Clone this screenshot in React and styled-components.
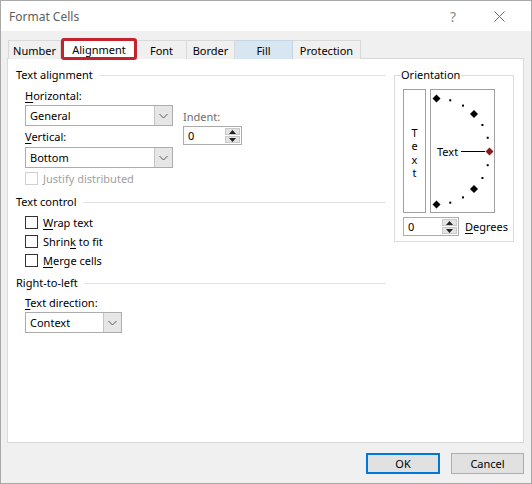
import styled, { createGlobalStyle } from "styled-components";

const GlobalStyle = createGlobalStyle`
	body {
		margin: 0;
		background: #ffffff;
		font-family: "Noto Sans", "Open Sans", sans-serif;
		font-size: 11px;
		color: #000;
	}
	u {
		text-decoration-thickness: 1px;
		text-underline-offset: 2px;
	}
`;

const Window = styled.div`
	box-sizing: border-box;
	width: 532px;
	height: 484px;
	border: 1px solid #a8a8a8;
	background: #f0f0f0;
	display: flex;
	flex-direction: column;
`;

const TitleBar = styled.div`
	height: 30px;
	background: #ffffff;
	display: flex;
	align-items: center;
	padding: 0 9px 0 8px;
	color: #5e5e5e;
	font-size: 12px;
`;

const Title = styled.span`
	flex: 1;
`;

const TitleButton = styled.div`
	width: 46px;
	height: 30px;
	display: flex;
	align-items: center;
	justify-content: center;
	color: #8a8a8a;
	font-size: 14px;
`;

const TabStrip = styled.div`
	display: flex;
	align-items: flex-end;
	height: 19px;
	margin: 9px 0 -1px 7px;
	position: relative;
	z-index: 1;
`;

const Tab = styled.div`
	box-sizing: border-box;
	flex-shrink: 0;
	width: ${(p) => p.$w}px;
	height: ${(p) => (p.$active ? 22 : 19)}px;
	margin-bottom: ${(p) => (p.$active ? -1 : 0)}px;
	display: flex;
	align-items: center;
	justify-content: center;
	background: ${(p) => (p.$active ? "#ffffff" : p.$hover ? "#d8e6f2" : "#f0f0f0")};
	border: ${(p) =>
		p.$active ? "3px solid #c4232d" : p.$hover ? "1px solid #c3d6e8" : "1px solid #d9d9d9"};
	border-bottom: ${(p) => (p.$active ? "3px solid #c4232d" : "none")};
	border-left: ${(p) => (p.$active ? "3px solid #c4232d" : p.$first ? "1px solid #d9d9d9" : "none")};
	border-radius: ${(p) => (p.$active ? "3px" : "0")};
	padding-top: ${(p) => (p.$active ? 0 : 1)}px;
	color: #000;
`;

const Panel = styled.div`
	box-sizing: border-box;
	margin: 0 7px 0 6px;
	height: 385px;
	background: #ffffff;
	border: 1px solid #d9d9d9;
	padding: 9px 8px 0 8px;
	display: flex;
	gap: 8px;
	align-items: flex-start;
`;

const LeftColumn = styled.div`
	width: 370px;
	display: flex;
	flex-direction: column;
`;

const SectionHeader = styled.div`
	display: flex;
	align-items: center;
	height: 14px;
	line-height: 14px;
	margin-top: ${(p) => p.$mt || 0}px;
	white-space: nowrap;
	&::after {
		content: "";
		flex: 1;
		height: 1px;
		background: #e2e2e2;
		margin-left: 6px;
	}
`;

const Indented = styled.div`
	margin-left: 9px;
	display: flex;
	flex-direction: column;
`;

const AlignRow = styled.div`
	display: flex;
	gap: 10px;
	margin-top: 7px;
`;

const Stack = styled.div`
	display: flex;
	flex-direction: column;
`;

const Label = styled.div`
	height: 14px;
	line-height: 14px;
	margin-top: ${(p) => p.$mt || 0}px;
	color: ${(p) => (p.$muted ? "#6d6d6d" : "#000")};
	white-space: nowrap;
`;

const Select = styled.div`
	box-sizing: border-box;
	width: ${(p) => p.$w}px;
	height: 21px;
	margin-top: ${(p) => p.$mt || 0}px;
	border: 1px solid #acacac;
	background: #ffffff;
	display: flex;
	align-items: stretch;
`;

const SelectValue = styled.div`
	flex: 1;
	display: flex;
	align-items: center;
	padding-left: 4px;
`;

const SelectArrow = styled.div`
	width: 17px;
	background: #e6e6e6;
	border-left: 1px solid #c4c4c4;
	display: flex;
	align-items: center;
	justify-content: center;
`;

const Spinner = styled.div`
	box-sizing: border-box;
	width: ${(p) => p.$w}px;
	height: 19px;
	margin-top: ${(p) => p.$mt || 0}px;
	border: 1px solid #acacac;
	background: #ffffff;
	display: flex;
	padding: 1px;
`;

const SpinValue = styled.div`
	flex: 1;
	display: flex;
	align-items: center;
	padding-left: 3px;
`;

const SpinButtons = styled.div`
	width: 15px;
	display: flex;
	flex-direction: column;
	gap: 1px;
`;

const SpinButton = styled.div`
	flex: 1;
	background: #e3e3e3;
	border: 1px solid #c9c9c9;
	display: flex;
	align-items: center;
	justify-content: center;
`;

const CheckRow = styled.div`
	display: flex;
	align-items: center;
	gap: 5px;
	height: 14px;
	margin-top: ${(p) => p.$mt || 0}px;
	color: ${(p) => (p.$disabled ? "#a0a0a0" : "#000")};
	white-space: nowrap;
`;

const CheckBox = styled.div`
	box-sizing: border-box;
	width: 13px;
	height: 13px;
	border: 1px solid ${(p) => (p.$disabled ? "#d0d0d0" : "#333333")};
	background: #ffffff;
`;

const OrientationGroup = styled.div`
	position: relative;
	box-sizing: border-box;
	width: 120px;
	height: 167px;
	margin-top: 7px;
	border: 1px solid #dcdcdc;
	padding: 13px 0 0 8px;
`;

const Legend = styled.div`
	position: absolute;
	top: -8px;
	left: 5px;
	padding: 0 1px;
	background: #ffffff;
	line-height: 14px;
`;

const OrientRow = styled.div`
	display: flex;
	gap: 4px;
`;

const VerticalBox = styled.div`
	box-sizing: border-box;
	width: 23px;
	height: 124px;
	border: 1px solid #a0a0a0;
	display: flex;
	align-items: center;
	justify-content: center;
`;

const VerticalText = styled.span`
	writing-mode: vertical-lr;
	text-orientation: upright;
	letter-spacing: -1.7px;
	line-height: 13px;
	margin-top: 2px;
`;

const DialBox = styled.div`
	box-sizing: border-box;
	width: 65px;
	height: 124px;
	border: 1px solid #a0a0a0;
	display: flex;
`;

const DegreesRow = styled.div`
	display: flex;
	align-items: center;
	gap: 6px;
	margin-top: 4px;
`;

const Footer = styled.div`
	display: flex;
	justify-content: flex-end;
	gap: 11px;
	margin: 10px 7px 0 0;
`;

const Button = styled.div`
	box-sizing: border-box;
	width: ${(p) => p.$w}px;
	height: 21px;
	background: #e1e1e1;
	border: ${(p) => (p.$default ? "2px solid #0078d7" : "1px solid #adadad")};
	display: flex;
	align-items: center;
	justify-content: center;
`;

function Chevron() {
	return (
		<svg width="9" height="6" viewBox="0 0 9 6">
			<path d="M0.5 1 L4.5 5 L8.5 1" fill="none" stroke="#555" strokeWidth="1" />
		</svg>
	);
}

function Arrow({ up }) {
	return (
		<svg width="7" height="4" viewBox="0 0 7 4">
			<path d={up ? "M0 4 L3.5 0 L7 4 Z" : "M0 0 L3.5 4 L7 0 Z"} fill="#222" />
		</svg>
	);
}

function SelectBox({ w, mt, value }) {
	return (
		<Select $w={w} $mt={mt}>
			<SelectValue>{value}</SelectValue>
			<SelectArrow>
				<Chevron />
			</SelectArrow>
		</Select>
	);
}

function SpinBox({ w, mt }) {
	return (
		<Spinner $w={w} $mt={mt}>
			<SpinValue>0</SpinValue>
			<SpinButtons>
				<SpinButton>
					<Arrow up />
				</SpinButton>
				<SpinButton>
					<Arrow />
				</SpinButton>
			</SpinButtons>
		</Spinner>
	);
}

function Dial() {
	const cx = 5.5;
	const cy = 61.5;
	const r = 53;
	const marks = [];
	for (let i = 0; i <= 12; i++) {
		const deg = 90 - i * 15;
		const a = (deg * Math.PI) / 180;
		const x = cx + r * Math.cos(a);
		const y = cy - r * Math.sin(a);
		const diamond = `M${x} ${y - 4} L${x + 4} ${y} L${x} ${y + 4} L${x - 4} ${y} Z`;
		if (deg === 0) {
			marks.push(<path key={i} d={diamond} fill="#8b1a1a" />);
		} else if (deg % 45 === 0) {
			marks.push(<path key={i} d={diamond} fill="#000" />);
		} else {
			marks.push(<rect key={i} x={x - 1} y={y - 1} width="2" height="2" fill="#000" />);
		}
	}
	return (
		<svg width="63" height="122" viewBox="0 0 63 122">
			{marks}
			<text x="6" y="65.5" fontSize="11" fontFamily="Noto Sans, sans-serif" fill="#000">
				Text
			</text>
			<line x1="30" y1="61.5" x2="54" y2="61.5" stroke="#000" strokeWidth="1" />
		</svg>
	);
}

export default function App() {
	return (
		<>
			<GlobalStyle />
			<Window>
				<TitleBar>
					<Title>Format Cells</Title>
					<TitleButton>?</TitleButton>
					<TitleButton>
						<svg width="11" height="11" viewBox="0 0 11 11">
							<path d="M0.5 0.5 L10.5 10.5 M10.5 0.5 L0.5 10.5" stroke="#6a6a6a" strokeWidth="1" />
						</svg>
					</TitleButton>
				</TitleBar>

				<TabStrip>
					<Tab $w={53} $first>Number</Tab>
					<Tab $w={76} $active>Alignment</Tab>
					<Tab $w={50}>Font</Tab>
					<Tab $w={48}>Border</Tab>
					<Tab $w={58} $hover>Fill</Tab>
					<Tab $w={68}>Protection</Tab>
				</TabStrip>

				<Panel>
					<LeftColumn>
						<SectionHeader>Text alignment</SectionHeader>
						<Indented>
							<AlignRow>
								<Stack>
									<Label>
										<u>H</u>orizontal:
									</Label>
									<SelectBox w={148} mt={2} value="General" />
									<Label $mt={4}>
										<u>V</u>ertical:
									</Label>
									<SelectBox w={148} mt={3} value="Bottom" />
								</Stack>
								<Stack>
									<Label $muted $mt={21}>
										Indent:
									</Label>
									<SpinBox w={59} mt={2} />
								</Stack>
							</AlignRow>
							<CheckRow $disabled $mt={3}>
								<CheckBox $disabled />
								Justify distributed
							</CheckRow>
						</Indented>

						<SectionHeader $mt={10}>Text control</SectionHeader>
						<Indented>
							<CheckRow $mt={6}>
								<CheckBox />
								<span>
									<u>W</u>rap text
								</span>
							</CheckRow>
							<CheckRow $mt={5}>
								<CheckBox />
								<span>
									Shrin<u>k</u> to fit
								</span>
							</CheckRow>
							<CheckRow $mt={5}>
								<CheckBox />
								<span>
									<u>M</u>erge cells
								</span>
							</CheckRow>
						</Indented>

						<SectionHeader $mt={9}>Right-to-left</SectionHeader>
						<Indented>
							<Label $mt={6}>
								<u>T</u>ext direction:
							</Label>
							<SelectBox w={97} mt={2} value="Context" />
						</Indented>
					</LeftColumn>

					<OrientationGroup>
						<Legend>Orientation</Legend>
						<OrientRow>
							<VerticalBox>
								<VerticalText>Text</VerticalText>
							</VerticalBox>
							<DialBox>
								<Dial />
							</DialBox>
						</OrientRow>
						<DegreesRow>
							<SpinBox w={56} />
							<span>
								<u>D</u>egrees
							</span>
						</DegreesRow>
					</OrientationGroup>
				</Panel>

				<Footer>
					<Button $w={74} $default>
						OK
					</Button>
					<Button $w={73}>Cancel</Button>
				</Footer>
			</Window>
		</>
	);
}
